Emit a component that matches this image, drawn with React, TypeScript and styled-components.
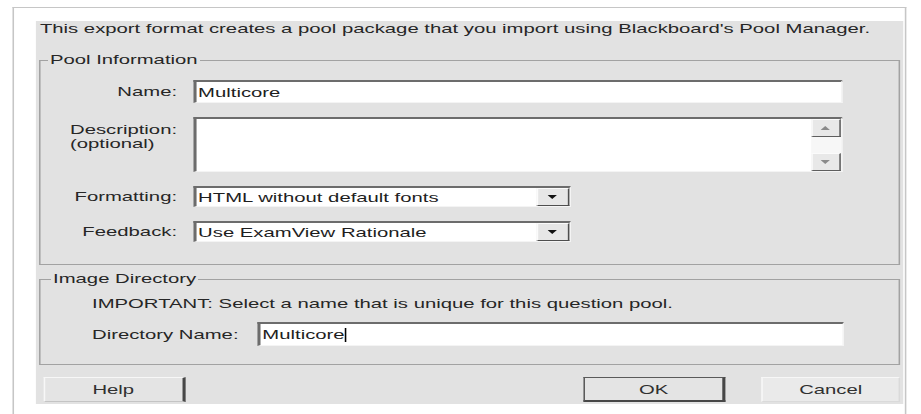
import React from 'react';
import styled, { createGlobalStyle } from 'styled-components';

const GlobalStyle = createGlobalStyle`
    html, body {
        margin: 0;
        padding: 0;
        background: #ffffff;
        overflow: hidden;
    }
    body {
        font-family: "Liberation Sans", Arial, sans-serif;
        font-size: 13px;
        color: #262626;
    }
`;

// the dialog is laid out at its native width and stretched sideways
const Stage = styled.div`
    width: 590px;
    height: 414px;
    padding-top: 7px;
    box-sizing: border-box;
    transform: scaleX(1.56);
    transform-origin: 0 0;
`;

const Frame = styled.div`
    margin-left: 7.5px;
    width: 573px;
    height: 407px;
    box-sizing: border-box;
    border: 1px solid #c6c6c6;
    border-bottom: none;
    padding: 13px 0 0 14px;
`;

const Panel = styled.div`
    width: 556px;
    height: 383px;
    box-sizing: border-box;
    background: #e2e2e2;
    padding: 0 1.5px 0 2.5px;
    display: flex;
    flex-direction: column;
`;

const Intro = styled.div`
    height: 16px;
    line-height: 16px;
    padding-left: 0.6px;
    white-space: nowrap;
`;

const Group = styled.fieldset<{ $top: number }>`
    margin: ${p => p.$top}px 0 0 0;
    padding: 0;
    min-width: 0;
    border: 1px solid #a2a2a2;
`;

const Legend = styled.legend<{ $indent: number }>`
    margin-left: ${p => p.$indent}px;
    padding: 0 1px;
    font-size: 13px;
    line-height: 16px;
    color: #262626;
`;

const InfoGrid = styled.div`
    display: grid;
    grid-template-columns: 87.5px 416px;
    column-gap: 10px;
    row-gap: 14px;
    padding: 12px 0 22px 0;
`;

const Label = styled.div<{ $top?: boolean }>`
    align-self: ${p => (p.$top ? 'start' : 'center')};
    justify-self: end;
    text-align: ${p => (p.$top ? 'left' : 'right')};
    line-height: 14px;
    padding-top: ${p => (p.$top ? '6px' : '0')};
    white-space: nowrap;
`;

const Sunken = styled.div<{ $h: number; $w?: number }>`
    height: ${p => p.$h}px;
    width: ${p => (p.$w ? `${p.$w}px` : 'auto')};
    box-sizing: border-box;
    background: #ffffff;
    border-top: 2px solid #6c6c6c;
    border-left: 2px solid #6c6c6c;
    border-right: 1px solid #f4f4f4;
    border-bottom: 1px solid #f4f4f4;
    display: flex;
    align-items: stretch;
`;

const FieldText = styled.div`
    flex: 1;
    display: flex;
    align-items: center;
    padding-left: 1.5px;
    white-space: nowrap;
    color: #1e1e1e;
`;

const Caret = styled.span`
    display: inline-block;
    width: 1px;
    height: 14px;
    background: #000;
`;

const ScrollCol = styled.div`
    width: 19px;
    background: #f7f7f7;
    display: flex;
    flex-direction: column;
    justify-content: space-between;
`;

const ScrollBtn = styled.div`
    height: 18px;
    box-sizing: border-box;
    background: #e8e8e8;
    border-top: 1px solid #fbfbfb;
    border-left: 1px solid #fbfbfb;
    border-right: 1.5px solid #5e5e5e;
    border-bottom: 1.5px solid #5e5e5e;
    display: flex;
    align-items: center;
    justify-content: center;
`;

const DropBtn = styled.div`
    width: 21px;
    box-sizing: border-box;
    background: #e6e6e6;
    border-top: 1px solid #fbfbfb;
    border-left: 1px solid #fbfbfb;
    border-right: 1.5px solid #4e4e4e;
    border-bottom: 1.5px solid #4e4e4e;
    display: flex;
    align-items: center;
    justify-content: center;
`;

const DirBody = styled.div`
    padding: 9px 0 18px 33px;
    display: flex;
    flex-direction: column;
    gap: 10px;
`;

const Note = styled.div`
    height: 16px;
    line-height: 16px;
    white-space: nowrap;
`;

const DirRow = styled.div`
    display: grid;
    grid-template-columns: 105.7px 376px;
    align-items: center;
`;

const ButtonRow = styled.div`
    margin-top: 12px;
    display: flex;
    padding-left: 2.6px;
`;

type Kind = 'plain' | 'default' | 'flat';

const PushButton = styled.div<{ $kind: Kind }>`
    width: ${p => (p.$kind === 'flat' ? 89 : 91)}px;
    height: 25px;
    box-sizing: border-box;
    display: flex;
    align-items: center;
    justify-content: center;
    color: #303030;
    background: ${p => (p.$kind === 'flat' ? '#eaeaea' : '#e4e4e4')};
    border-top: 1px solid ${p => (p.$kind === 'default' ? '#5a5a5a' : '#f7f7f7')};
    border-left: 1px solid ${p => (p.$kind === 'default' ? '#5a5a5a' : '#f7f7f7')};
    border-right: ${p => (p.$kind === 'flat' ? '1px solid #dadada' : '2px solid #474747')};
    border-bottom: ${p => (p.$kind === 'default' ? '2px solid #474747' : p.$kind === 'flat' ? '1px solid #dadada' : '1px solid #c4c4c4')};
`;

const Spacer = styled.div`
    flex: 1;
`;

const Gap = styled.div`
    width: 23px;
`;

const Arrow = ({ up, color }: { up?: boolean; color: string }) => (
    <svg width="6" height="4" viewBox="0 0 6 4">
        <polygon points={up ? '0,4 6,4 3,0' : '0,0 6,0 3,4'} fill={color} />
    </svg>
);

const Combo = ({ value }: { value: string }) => (
    <Sunken $h={21} $w={242}>
        <FieldText>{value}</FieldText>
        <DropBtn>
            <Arrow color="#111" />
        </DropBtn>
    </Sunken>
);

const App: React.FC = () => {
    return (
        <>
            <GlobalStyle />
            <Stage>
                <Frame>
                    <Panel>
                        <Intro>This export format creates a pool package that you import using Blackboard's Pool Manager.</Intro>

                        <Group $top={15}>
                            <Legend $indent={5}>Pool Information</Legend>
                            <InfoGrid>
                                <Label>Name:</Label>
                                <Sunken $h={23}>
                                    <FieldText>Multicore</FieldText>
                                </Sunken>

                                <Label $top>Description:<br />(optional)</Label>
                                <Sunken $h={55}>
                                    <FieldText />
                                    <ScrollCol>
                                        <ScrollBtn><Arrow up color="#8a8a8a" /></ScrollBtn>
                                        <ScrollBtn><Arrow color="#8a8a8a" /></ScrollBtn>
                                    </ScrollCol>
                                </Sunken>

                                <Label>Formatting:</Label>
                                <Combo value="HTML without default fonts" />

                                <Label>Feedback:</Label>
                                <Combo value="Use ExamView Rationale" />
                            </InfoGrid>
                        </Group>

                        <Group $top={6}>
                            <Legend $indent={7}>Image Directory</Legend>
                            <DirBody>
                                <Note>IMPORTANT: Select a name that is unique for this question pool.</Note>
                                <DirRow>
                                    <span>Directory Name:</span>
                                    <Sunken $h={24}>
                                        <FieldText>Multicore<Caret /></FieldText>
                                    </Sunken>
                                </DirRow>
                            </DirBody>
                        </Group>

                        <ButtonRow>
                            <PushButton $kind="plain">Help</PushButton>
                            <Spacer />
                            <PushButton $kind="default">OK</PushButton>
                            <Gap />
                            <PushButton $kind="flat">Cancel</PushButton>
                        </ButtonRow>
                    </Panel>
                </Frame>
            </Stage>
        </>
    );
};

export default App;
